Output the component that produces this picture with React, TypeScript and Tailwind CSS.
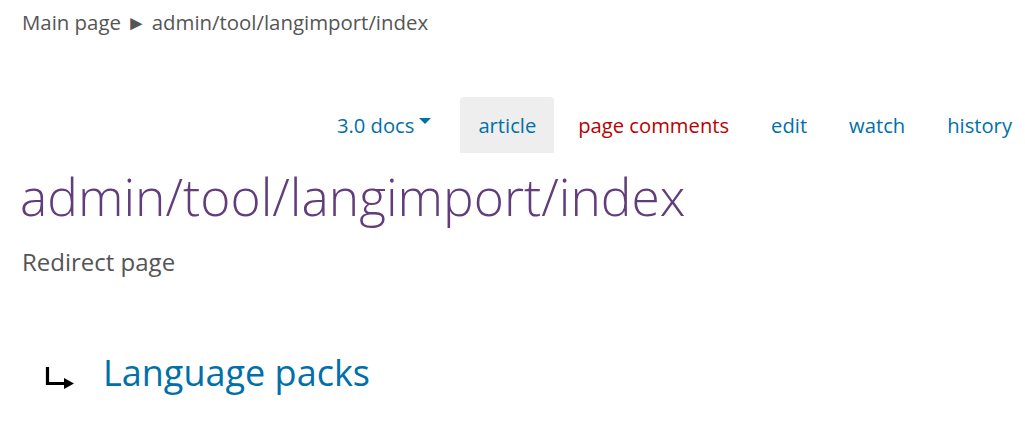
import React from 'react';

const tabs = [
  { label: 'article', color: 'text-[#0070a8]', active: true },
  { label: 'page comments', color: 'text-[#ba0000]', active: false },
  { label: 'edit', color: 'text-[#0070a8]', active: false },
  { label: 'watch', color: 'text-[#0070a8]', active: false },
  { label: 'history', color: 'text-[#0070a8]', active: false },
];

export default function App() {
  return (
    <div className="w-[1025px] h-[422px] bg-white overflow-hidden font-['Open_Sans',sans-serif] text-[#555]">
      <div className="px-[22px] pt-[8px] text-[20.4px] leading-[28px] whitespace-nowrap">
        Main page ► admin/tool/langimport/index
      </div>

      <div className="flex justify-end items-end mt-[61px] -mr-[5px] h-[56px] gap-[6px]">
        <div className="flex items-center h-full px-[18px] mr-[5px] pt-[1px] text-[20.2px] text-[#0070a8]">
          3.0 docs
          <span className="ml-[5px] -mt-[10px] w-0 h-0 border-l-[6px] border-r-[6px] border-t-[6px] border-l-transparent border-r-transparent border-t-[#0070a8]" />
        </div>
        {tabs.map((t) => (
          <div
            key={t.label}
            className={`flex items-center h-full px-[18px] pt-[1px] text-[20.2px] rounded-t-[4px] ${t.color} ${t.active ? 'bg-[#eeeeee]' : ''}`}
          >
            {t.label}
          </div>
        ))}
      </div>

      <h1 className="px-[20px] mt-[12px] text-[51.5px] leading-[62px] font-light text-[#613d7c] whitespace-nowrap">
        admin/tool/langimport/index
      </h1>

      <div className="px-[22px] mt-[19px] text-[24px] leading-[32px]">Redirect page</div>

      <div className="flex items-center mt-[71px] pl-[45px]">
        <svg width="30" height="26" viewBox="0 0 30 26" className="mr-[28px] mt-[12px]">
          <path d="M2.5 1 V17.5 H21" fill="none" stroke="#000" strokeWidth="3.2" />
          <path d="M19 12 L29 17.5 L19 23 Z" fill="#000" />
        </svg>
        <span className="text-[36px] leading-[48px] text-[#0070a8]">Language packs</span>
      </div>
    </div>
  );
}
